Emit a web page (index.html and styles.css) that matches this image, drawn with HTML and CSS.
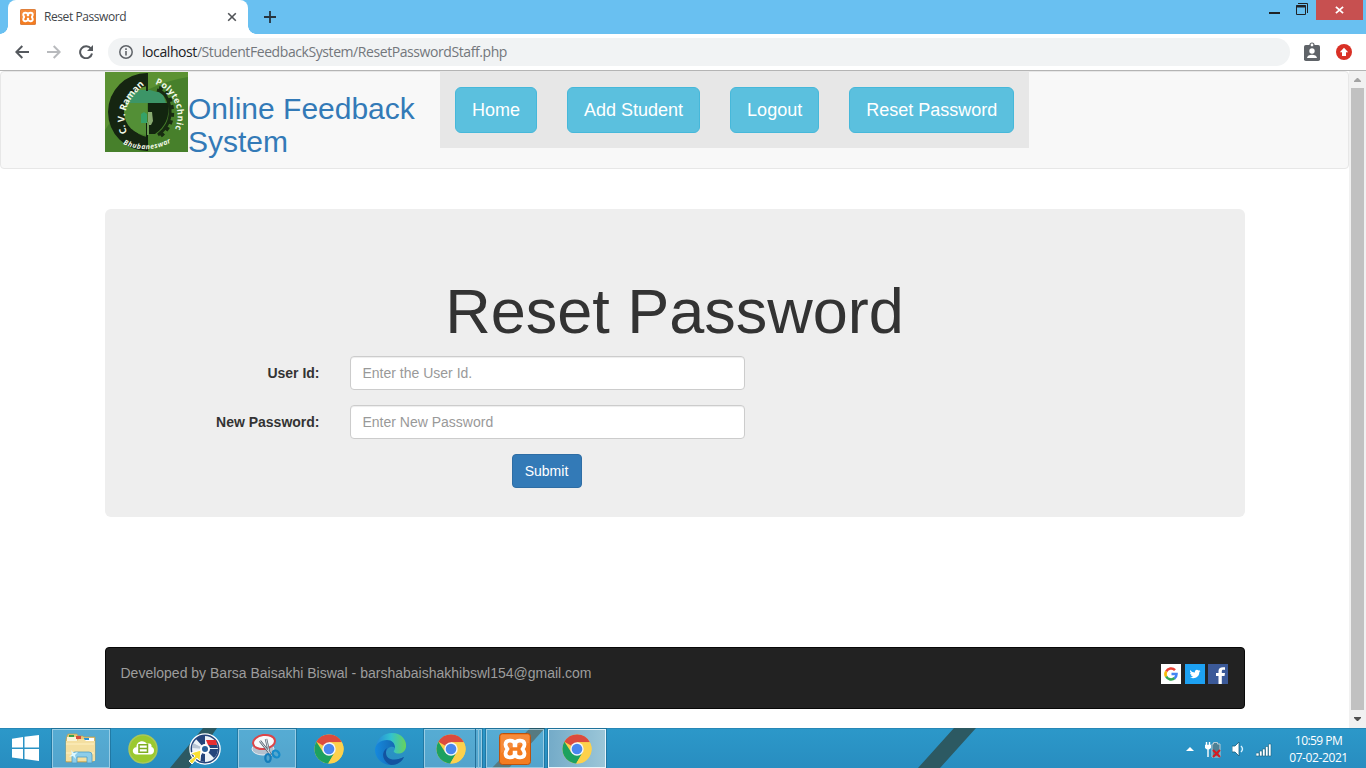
FILE: index.html
```html
<!DOCTYPE html>
<html lang="en">
<head>
<meta charset="utf-8">
<title>Reset Password</title>
<link rel="stylesheet" href="styles.css">
</head>
<body>
<svg class="defs" width="0" height="0">
  <defs>
    <symbol id="chrome" viewBox="0 0 30 30">
      <circle cx="15" cy="15" r="14.5" fill="#fbd04b"/>
      <path d="M15 15 2.4 7.8A14.5 14.5 0 0 1 27.9 8.3H15z" fill="#dc4b3e"/>
      <path d="M2.4 7.8A14.5 14.5 0 0 0 14.2 29.5L20.8 18.3 15 15l-5.8 3.3z" fill="#1da15f"/>
      <path d="M15 8.3h12.9A14.5 14.5 0 0 1 14.2 29.5l6.6-11.2z" fill="#fdd14c"/>
      <circle cx="15" cy="15" r="6.7" fill="#f4f6fa"/>
      <circle cx="15" cy="15" r="5.3" fill="#4a87ee"/>
    </symbol>
    <symbol id="xampp" viewBox="0 0 32 32">
      <rect x=".5" y=".5" width="31" height="31" rx="3" fill="#f47c20" stroke="#b9520f"/>
      <path d="M2 2h28v8Q15 12 2 20z" fill="#fff" opacity=".12"/>
      <path d="M16 10.500C14.500 6.500 6.500 6.500 6.500 11.500c0 2 1 3 2 4.500-1 1.500-2 2.500-2 4.500 0 5 8 5 9.500 1 1.500 4 9.500 4 9.500-1 0-2-1-3-2-4.500 1-1.500 2-2.500 2-4.500 0-5-8-5-9.500-1z" fill="none" stroke="#fff" stroke-width="3.800" stroke-linejoin="round"/>
      <path d="M16 10v4.300M16 22v-4.300" stroke="#fff" stroke-width="4.500" fill="none"/>
    </symbol>
  </defs>
</svg>

<header class="tabstrip">
  <div class="tab">
    <svg class="favicon" width="16" height="16"><use href="#xampp"/></svg>
    <span class="tab-title">Reset Password</span>
    <svg width="10" height="10" viewBox="0 0 10 10"><path d="M1.200 1.200l7.600 7.600M8.800 1.200 1.200 8.800" stroke="#505357" stroke-width="1.600"/></svg>
  </div>
  <svg class="new-tab" width="14" height="14" viewBox="0 0 14 14"><path d="M7 1v12M1 7h12" stroke="#27343e" stroke-width="1.800"/></svg>
  <div class="window-controls">
    <svg width="12" height="20" viewBox="0 0 12 20"><path d="M0 13h11" stroke="#202326" stroke-width="2"/></svg>
    <svg width="12" height="20" viewBox="0 0 12 20"><path d="M.5 5.500h9v9h-9zM2 3.500h9.500V13" fill="none" stroke="#202326"/><path d="M0 6.500h10" stroke="#202326" stroke-width="2"/></svg>
    <div class="close"><svg width="9" height="8" viewBox="0 0 10 8"><path d="M1 .5l8 7M9 .5l-8 7" stroke="#fff" stroke-width="2"/></svg></div>
  </div>
</header>

<div class="toolbar">
  <svg width="14" height="14" viewBox="0 0 14 14"><path d="M14 7H1.500M7.300 1 1.300 7l6 6" fill="none" stroke="#55595e" stroke-width="2"/></svg>
  <svg width="14" height="14" viewBox="0 0 14 14"><path d="M0 7h12.500M6.700 1l6 6-6 6" fill="none" stroke="#b8babd" stroke-width="2"/></svg>
  <svg width="14" height="14" viewBox="0 0 14 14"><path d="M12 3.700A6 6 0 1 0 13 8.500" fill="none" stroke="#55595e" stroke-width="2"/><path d="M14 0v6H8z" fill="#55595e"/></svg>
  <div class="address">
    <svg width="14" height="14" viewBox="0 0 14 14"><circle cx="7" cy="7" r="6.200" fill="none" stroke="#5f6368" stroke-width="1.500"/><path d="M7 6v4.500M7 3.300v1.600" stroke="#5f6368" stroke-width="1.600"/></svg>
    <span class="url"><b>localhost</b>/StudentFeedbackSystem/ResetPasswordStaff.php</span>
  </div>
  <svg class="badge-icon" width="16" height="20" viewBox="0 0 16 20"><rect y="3" width="16" height="16" rx="1.800" fill="#5f6368"/><circle cx="8" cy="3" r="2" fill="#fff" stroke="#5f6368" stroke-width="1.200"/><circle cx="8" cy="9" r="2.700" fill="#fff"/><path d="M3 16c0-4.500 10-4.500 10 0z" fill="#fff"/></svg>
  <svg width="16" height="16" viewBox="0 0 16 16"><circle cx="8" cy="8" r="8" fill="#d93025"/><path d="M8 3.700l4.200 4.500H10V12H6V8.200H3.800z" fill="#fff"/></svg>
</div>

<div class="viewport">
  <div class="page">
    <nav class="navbar">
      <div class="container nav-inner">
        <svg class="logo" width="83" height="80" viewBox="0 0 83 80">
          <rect width="83" height="80" fill="#47802b"/>
          <path d="M0 0h83v5Q40 12 12 40L0 58z" fill="#5c9233"/>
          <path d="M42 1A39 39 0 0 0 42 79V65A26 26 0 0 1 42 14z" fill="#152511"/>
          <path d="M42 17a23 23 0 0 0 0 46z" fill="#538f36"/>
          <path d="M43 31h20q3 20-13 31h-7z" fill="#12250f"/>
          <path d="M24 21l5-1 6-2h10l7 2h5l4 11H22z" fill="#3c9567"/>
          <path d="M42 1v18" stroke="#172811" stroke-width="2"/>
          <path d="M52 18c8 2 12 9 13 20s-5 20-12 25" fill="none" stroke="#172b11" stroke-width="3"/>
          <path d="M54 16c8 2 12 10 13 22s-5 21-13 27" fill="none" stroke="#172b11" stroke-width="4" stroke-dasharray="4 3.500"/>
          <path d="M42 50v29" stroke="#10200e" stroke-width="2"/>
          <path d="M36 42l3-2 3 2v9h-6z" fill="#36a268"/><path d="M43 40h4l1 9-2 4h-3z" fill="#88aa70"/><path d="M42 50h2v13h-2z" fill="#6d9e54"/>
          <path id="left-arc" d="M22 61Q12 34 42 11" fill="none"/>
          <path id="right-arc" d="M50 12A34 34 0 0 1 68 61" fill="none"/>
          <path id="base-arc" d="M18 72Q44 84 70 68" fill="none"/>
          <text class="logo-main"><textPath href="#left-arc" textLength="55">C. V. Raman</textPath></text>
          <text class="logo-side"><textPath href="#right-arc" textLength="55">Polytechnic</textPath></text>
          <text class="logo-base"><textPath href="#base-arc" textLength="50">Bhubaneswar</textPath></text>
        </svg>
        <div class="brand">Online Feedback System</div>
        <div class="menu">
          <a class="btn-info">Home</a><a class="btn-info">Add Student</a><a class="btn-info">Logout</a><a class="btn-info">Reset Password</a>
        </div>
      </div>
    </nav>
    <main class="container jumbotron">
      <h1>Reset Password</h1>
      <div class="form-row"><label>User Id:</label><input type="text" placeholder="Enter the User Id."></div>
      <div class="form-row"><label>New Password:</label><input type="text" placeholder="Enter New Password"></div>
      <button class="submit">Submit</button>
    </main>
    <footer class="container footer">
      <span class="credit">Developed by Barsa Baisakhi Biswal - barshabaishakhibswl154@gmail.com</span>
      <div class="social">
        <svg width="20" height="20" viewBox="0 0 20 20"><path fill="#fff" d="M0 0h20v20H0z"/><g fill="none" stroke-width="2.600"><path d="M5.200 7.500A5.400 5.400 0 0 1 14 6.200" stroke="#ea4335"/><path d="M5.200 7.300a5.400 5.400 0 0 0 0 5.400" stroke="#fbbc05"/><path d="M5.200 12.500A5.400 5.400 0 0 0 13.700 14" stroke="#34a853"/><path d="M10.500 10h5q0 3-2 4.300" stroke="#4285f4"/></g></svg>
        <svg width="20" height="20" viewBox="0 0 20 20"><path fill="#1da1f2" d="M0 0h20v20H0z"/><path fill="#fff" d="M5 6q2 2.500 4.900 2.600C9.500 6 12 5 13.500 6.500L15 6l-.7 1.300L15.500 7l-1.200 1.300C14.300 13 9.500 15.700 5 13.500q2 0 3-.9-1.700-.2-2.100-1.500h.9Q5 10.500 5 8.700l1 .2Q4.500 7.700 5 6z"/></svg>
        <svg class="facebook" width="20" height="20" viewBox="0 0 20 20"><path fill="#3b5998" d="M0 0h20v20H0z"/><path fill="#fff" d="M10.500 20v-8H8V9h2.500V7c0-3 2-4.300 6.500-3.700v2.600c-2.500-.2-3.200 0-3.200 1.700V9H17l-.5 3h-2.700v8z"/></svg>
      </div>
    </footer>
  </div>
  <div class="scrollbar">
    <svg width="17" height="17" viewBox="0 0 17 17"><path d="M5 11h7v-1l-3-3H8l-3 3z" fill="#a3a3a3"/></svg>
    <div class="thumb"></div>
    <svg width="17" height="18" viewBox="0 0 17 18"><path d="M5 7h7v1l-3 3H8L5 8z" fill="#505050"/></svg>
  </div>
</div>

<div class="taskbar">
  <svg class="wallpaper" width="1366" height="40" viewBox="0 0 1366 40"><path d="M203 0h14l-28 40h-19zM530 0h15l-36 40h-17zM954 0h22l-36 40h-22z" fill="#2c5962"/></svg>
  <div class="start"><svg width="27" height="26" viewBox="0 0 27 26"><path fill="#fff" d="M0 3.700 11 2v10.500H0zM12.500 1.800 27 0v12.500H12.500zM0 14h11v10L0 22.500zM12.500 14H27v12l-14.500-1.900z"/></svg></div>
  <div class="task open">
    <svg width="34" height="34" viewBox="0 0 34 34"><path d="M3 4l1-2h9l1 2h5l1 1h11v23l-3 2H2V8z" fill="#e4c77a" stroke="#b99d52" stroke-width=".7"/><path d="M3 5h10v5H3z" fill="#f9f5d9"/><path d="M5 3h5v2H5z" fill="#37a349"/><path d="M12 4h5v3h-5z" fill="#d84d3b"/><path d="M21 6h9v3h-9z" fill="#fff"/><path d="M20 6h5v2h-5z" fill="#2792d4"/><path d="M2 9h11l2-2h5l2 2h9v20H2z" fill="#f4dfa0"/><path d="M2 12h28M2 21h28" stroke="#fff1c2"/><path d="M8 31v-8q0-3 3-3h14q3 0 3 3v8h-5v-6H13v6z" fill="#8dcde9" stroke="#4f9cc4" stroke-width=".8"/><path d="M7 18l3 3 4-1-3 3 1 4-3-3-4 1 3-3z" fill="#dcf8ff"/></svg>
  </div>
  <div class="task">
    <svg width="30" height="30" viewBox="0 0 30 30"><circle cx="15" cy="15" r="14" fill="#9bc92e" stroke="#aac85a" stroke-width="1.500"/><path d="M9 20.500C3 20.500 4 13 8.500 13.300 8 7 16 5 19 10c4-1.500 5 1 4.500 3 4 1 3 7.500-1 7.500z" fill="#fff"/><path d="M11 10.700h8.500v7.500H11zM11 14.500h8.500" fill="none" stroke="#7fae22" stroke-width="1.500"/></svg>
  </div>
  <div class="task">
    <svg width="34" height="34" viewBox="0 0 34 34"><circle cx="17" cy="17" r="15" fill="#dce4ed" stroke="#fff" stroke-width="1.500"/><circle cx="17" cy="17" r="13.700" fill="#eef3f7" stroke="#27467d" stroke-width="1.500"/><path d="M17 17 8 7q4-4 9-4zM17 17l13 0q0 5-4 9zM17 17v13q-4 0-7-2z" fill="#26457b"/><path d="M18 8h10l1 5H20z" fill="#e72e31"/><path d="M19 13h10l1 3h-9z" fill="#26457b"/><path d="M17 17 4 16l1-5z" fill="#b9c5d4"/><circle cx="17" cy="17" r="5" fill="#fff"/><circle cx="17" cy="17" r="3" fill="#29609b"/><path d="M13 18l-1 11-3-3-5 6-3-3 6-5-4-3z" fill="#f9df31" stroke="#fff"/></svg>
  </div>
  <div class="task open">
    <svg width="34" height="34" viewBox="0 0 34 34"><ellipse cx="13" cy="17" rx="11" ry="6" fill="#b4c1cf" stroke="#e4ebf2"/><ellipse cx="14" cy="10" rx="11" ry="7" transform="rotate(-8 14 10)" fill="#f8f9fb" stroke="#dc4448" stroke-width="2"/><path d="M10 9l12 15M16 7l4 17" stroke="#5d6975" stroke-width="2.500"/><path d="M10 9l12 15M16 7l4 17" stroke="#d6dde4" stroke-width="1"/><ellipse cx="18" cy="26" rx="2.700" ry="4" fill="none" stroke="#167dba" stroke-width="2.200"/><ellipse cx="26" cy="22" rx="3" ry="3.800" transform="rotate(-45 26 22)" fill="none" stroke="#168bc9" stroke-width="2.200"/></svg>
  </div>
  <div class="task"><svg width="30" height="30"><use href="#chrome"/></svg></div>
  <div class="task">
    <svg width="32" height="32" viewBox="0 0 32 32"><defs><linearGradient id="edge-top" x2="1"><stop stop-color="#2789d8"/><stop offset=".5" stop-color="#32c2cf"/><stop offset="1" stop-color="#68d35b"/></linearGradient><linearGradient id="edge-base" x2="1"><stop stop-color="#1689de"/><stop offset="1" stop-color="#145a9f"/></linearGradient></defs><path d="M1 14C2 5 9 0 17 0c10 0 15 8 14 14-1 7-9 8-12 5-1-1 1-2 1-4 0-4-4-6-8-6-5 0-9 3-11 5z" fill="url(#edge-top)"/><path d="M0 17c0-6 6-10 12-10 5 0 8 3 8 8-3-3-9 0-9 5 0 6 7 9 18 4-3 5-7 8-13 8C7 32 0 25 0 17z" fill="url(#edge-base)"/><path d="M12 15c-7 5-4 14 4 17 6 0 11-3 13-8-9 5-18 3-18-4 0-2 0-3 1-5z" fill="#1353a0"/></svg>
  </div>
  <div class="task open stacked"><svg width="30" height="30"><use href="#chrome"/></svg></div>
  <div class="task open"><svg width="32" height="32"><use href="#xampp"/></svg></div>
  <div class="task open active"><svg width="30" height="30"><use href="#chrome"/></svg></div>
  <div class="tray">
    <svg width="8" height="18" viewBox="0 0 8 18"><path d="M0 11l4-4 4 4z" fill="#fff"/></svg>
    <svg width="16" height="18" viewBox="0 0 16 18"><path d="M8.500 4V2.500h4V4H15v13H7V4z" fill="#4e8094" stroke="#b6cbd4"/><path d="M1.500 2v4M4.500 2v4M0 5.500h6M3 7v10" fill="none" stroke="#fff" stroke-width="1.400"/><path d="M0 5h6v3q-3 3-6 0z" fill="#fff"/><path d="M8 10l7 7M15 10l-7 7" stroke="#d71920" stroke-width="2"/></svg>
    <svg width="13" height="18" viewBox="0 0 13 18"><path d="M0 6h3l4-4v14l-4-4H0z" fill="#fff" stroke="#185d7b" stroke-width=".8"/><path d="M9 6q3 3 0 6" fill="none" stroke="#d8f2ff" stroke-width="1.400"/></svg>
    <svg width="16" height="18" viewBox="0 0 16 18"><path d="M0 13h3v3H0zM3.500 11H6v5H3.500zM6.500 9H9v7H6.500zM9.500 6.500H12V16H9.500zM12.500 4H15v12h-2.500z" fill="#fff" stroke="#1a617f" stroke-width=".6"/></svg>
    <div class="clock"><span class="time">10:59 PM</span><span class="date">07-02-2021</span></div>
  </div>
</div>
</body>
</html>
```
FILE: styles.css
```css
* { box-sizing: border-box; }
body {
  margin: 0; width: 1366px; height: 768px; overflow: hidden;
  display: flex; flex-direction: column;
  font: 14px/20px "Liberation Sans", Arial, sans-serif; color: #333; background: #fff;
}
svg { display: block; flex: none; }
.defs { position: absolute; }

.tabstrip { height: 34px; flex: none; display: flex; background: #69c0f1; padding-left: 8px; }
.tab {
  position: relative; width: 240px; height: 34px; display: flex; align-items: center;
  padding: 0 11px 0 12px; background: #fff; border-radius: 8px 8px 0 0;
}
.tab::before, .tab::after { content: ""; position: absolute; bottom: 0; width: 8px; height: 8px; }
.tab::before { left: -8px; background: radial-gradient(circle at 0 0, transparent 7.5px, #fff 8px); }
.tab::after { right: -8px; background: radial-gradient(circle at 100% 0, transparent 7.5px, #fff 8px); }
.tab-title { flex: 1; margin-left: 8px; font: 12px/16px "Open Sans", sans-serif; letter-spacing: -.42px; color: #41454a; }
.new-tab { margin: 10px 0 0 15px; }
.window-controls { margin-left: auto; display: flex; gap: 15px; }
.close { width: 47px; height: 20px; margin: 0 3px 0 -7px; background: #c75050; display: flex; align-items: center; justify-content: center; }

.toolbar { height: 37px; flex: none; display: flex; align-items: center; gap: 18px; padding: 0 14px 1px 15px; border-bottom: 1px solid #b4b4b4; }
.address { flex: 1; height: 28px; margin-right: -4px; margin-left: -3px; display: flex; align-items: center; border-radius: 14px; background: #f1f3f4; padding-left: 11px; }
.url { margin-left: 9px; font: 14px/20px "Open Sans", sans-serif; letter-spacing: -.42px; color: #73777c; }
.url b { font-weight: 400; color: #202124; }
.badge-icon { margin-right: -2px; }

.viewport { height: 657px; flex: none; display: flex; }
.page { width: 1349px; }
.container { width: 1140px; margin: 0 auto; }
.navbar { height: 98px; background: #f8f8f8; border: 1px solid #e7e7e7; border-radius: 4px; margin-bottom: 40px; }
.nav-inner { width: 1139px; display: flex; align-items: flex-start; margin-left: 104px; }
.logo-main, .logo-side, .logo-base { font-family: "Open Sans", sans-serif; font-weight: 700; fill: #f2f9e8; }
.logo-main { font-size: 9.5px; }
.logo-side { font-size: 9px; }
.logo-base { font-size: 7px; font-style: italic; }
.brand { width: 252px; padding: 20px 15px 0 0; font-size: 30px; line-height: 33px; color: #337ab7; }
.menu { height: 76px; padding: 15px; display: flex; gap: 30px; background: #e7e7e7; }
.btn-info { height: 46px; padding: 10px 16px; border: 1px solid #46b8da; border-radius: 6px; background: #5bc0de; color: #fff; font-size: 18px; line-height: 24px; }

.jumbotron { height: 308px; padding: 68px 15px 0; background: #eee; border-radius: 6px; }
.jumbotron h1 { margin: 0 0 10px; font-size: 63px; line-height: 69px; font-weight: 500; text-align: center; }
.form-row { display: flex; gap: 30px; margin-bottom: 15px; }
.form-row label { width: 200px; padding-top: 7px; text-align: right; font-weight: 700; }
.form-row input { width: 395px; height: 34px; padding: 6px 12px; border: 1px solid #ccc; border-radius: 4px; background: #fff; font: 14px/20px "Liberation Sans", Arial, sans-serif; box-shadow: inset 0 1px 1px rgba(0,0,0,.075); }
.form-row input::placeholder { color: #999; opacity: 1; }
.submit { display: block; width: 70px; height: 34px; margin-left: 392px; padding: 0; border: 1px solid #2e6da4; border-radius: 4px; background: #337ab7; color: #fff; font: 14px/20px "Liberation Sans", Arial, sans-serif; }
.footer { height: 62px; margin-top: 130px; padding: 16px 16px 0 15px; display: flex; justify-content: space-between; background: #222; border: 1px solid #080808; border-radius: 4px; color: #9d9d9d; }
.credit { margin-top: -1px; }
.social { display: flex; gap: 4px; }
.facebook { margin-left: -1px; }

.scrollbar { width: 17px; display: flex; flex-direction: column; background: #f1f1f1; }
.thumb { flex: 1; margin: 0 2px; background: #c1c1c1; }

.taskbar { position: relative; height: 40px; flex: none; display: flex; gap: 4px; background: linear-gradient(#2c98c9, #288dc0); border-top: 1px solid #2787b6; }
.wallpaper { position: absolute; left: 0; top: -1px; }
.start { width: 48px; padding: 6px 0 0 12px; position: relative; }
.task { position: relative; width: 58px; height: 39px; display: flex; align-items: center; justify-content: center; border: 1px solid transparent; }
.open { background: rgba(255,255,255,.2); border-color: rgba(196,228,242,.6); box-shadow: 0 0 0 1px rgba(20,82,116,.4); }
.stacked { padding-right: 4px; }
.stacked::after { content: ""; position: absolute; right: 2px; top: -1px; bottom: -1px; width: 2px; border-left: 1px solid #246f98; border-right: 1px solid #8bc3dc; }
.active { background: linear-gradient(90deg, #74abc8, #9bc6d8); border-color: #e6f4fa; }
.tray { position: relative; margin-left: auto; display: flex; align-items: center; gap: 11px; padding-right: 18px; color: #fff; }
.clock { width: 59px; margin-left: 6px; font: 12px/17px "Open Sans", sans-serif; text-align: center; white-space: nowrap; display: flex; flex-direction: column; align-items: center; }
.time { letter-spacing: -.55px; }
.date { letter-spacing: -.4px; }
```
